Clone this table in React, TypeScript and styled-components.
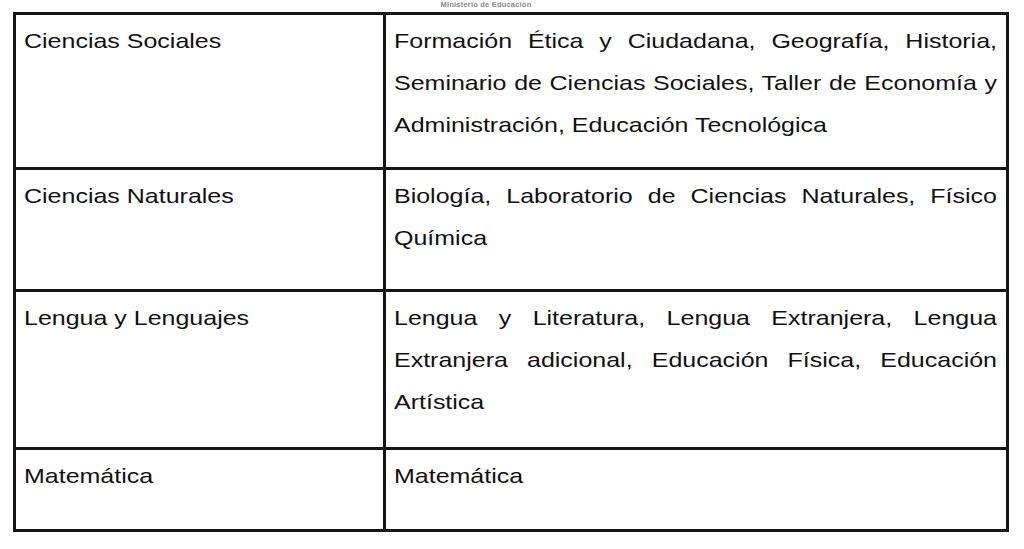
import styled, { createGlobalStyle } from "styled-components";

const GlobalStyle = createGlobalStyle`
  *, *::before, *::after {
    box-sizing: border-box;
  }

  body {
    margin: 0;
    background: #ffffff;
    font-family: "Liberation Sans", Arial, sans-serif;
    color: #111111;
  }
`;

const STRETCH = 1.19;

const Page = styled.div`
  width: 1024px;
  height: 549px;
  display: flex;
  flex-direction: column;
  overflow: hidden;
`;

const Header = styled.div`
  height: 12px;
  display: flex;
  justify-content: center;
  padding-right: 52px;
  font-size: 7.5px;
  font-weight: 700;
  color: #8a8a8a;
  line-height: 10px;
  letter-spacing: 0.2px;
`;

const Table = styled.div`
  margin-left: 13px;
  width: 996px;
  border: 3px solid #151515;
  display: flex;
  flex-direction: column;
`;

const Row = styled.div<{ $height: number }>`
  display: grid;
  grid-template-columns: 370px 1fr;
  height: ${(p) => p.$height}px;
  border-top: 3px solid #151515;

  &:first-child {
    height: ${(p) => p.$height - 3}px;
    border-top: none;
  }
`;

const Cell = styled.div<{ $divider?: boolean }>`
  padding: 5px 9px 0 8px;
  border-right: ${(p) => (p.$divider ? "3px solid #151515" : "none")};
  overflow: hidden;
`;

const CellText = styled.div`
  width: calc(100% / ${STRETCH});
  transform: scaleX(${STRETCH});
  transform-origin: left top;
  font-size: 21px;
  line-height: 42px;
  text-align: justify;
`;

const rows = [
  {
    area: "Ciencias Sociales",
    subjects:
      "Formación Ética y Ciudadana, Geografía, Historia, Seminario de Ciencias Sociales, Taller de Economía y Administración, Educación Tecnológica",
    height: 155,
  },
  {
    area: "Ciencias Naturales",
    subjects:
      "Biología, Laboratorio de Ciencias Naturales, Físico Química",
    height: 122,
  },
  {
    area: "Lengua y Lenguajes",
    subjects:
      "Lengua y Literatura, Lengua Extranjera, Lengua Extranjera adicional, Educación Física, Educación Artística",
    height: 158,
  },
  {
    area: "Matemática",
    subjects: "Matemática",
    height: 82,
  },
];

export default function App() {
  return (
    <Page>
      <GlobalStyle />
      <Header>Ministerio de Educación</Header>
      <Table>
        {rows.map((row) => (
          <Row key={row.area} $height={row.height}>
            <Cell $divider>
              <CellText>{row.area}</CellText>
            </Cell>
            <Cell>
              <CellText>{row.subjects}</CellText>
            </Cell>
          </Row>
        ))}
      </Table>
    </Page>
  );
}
